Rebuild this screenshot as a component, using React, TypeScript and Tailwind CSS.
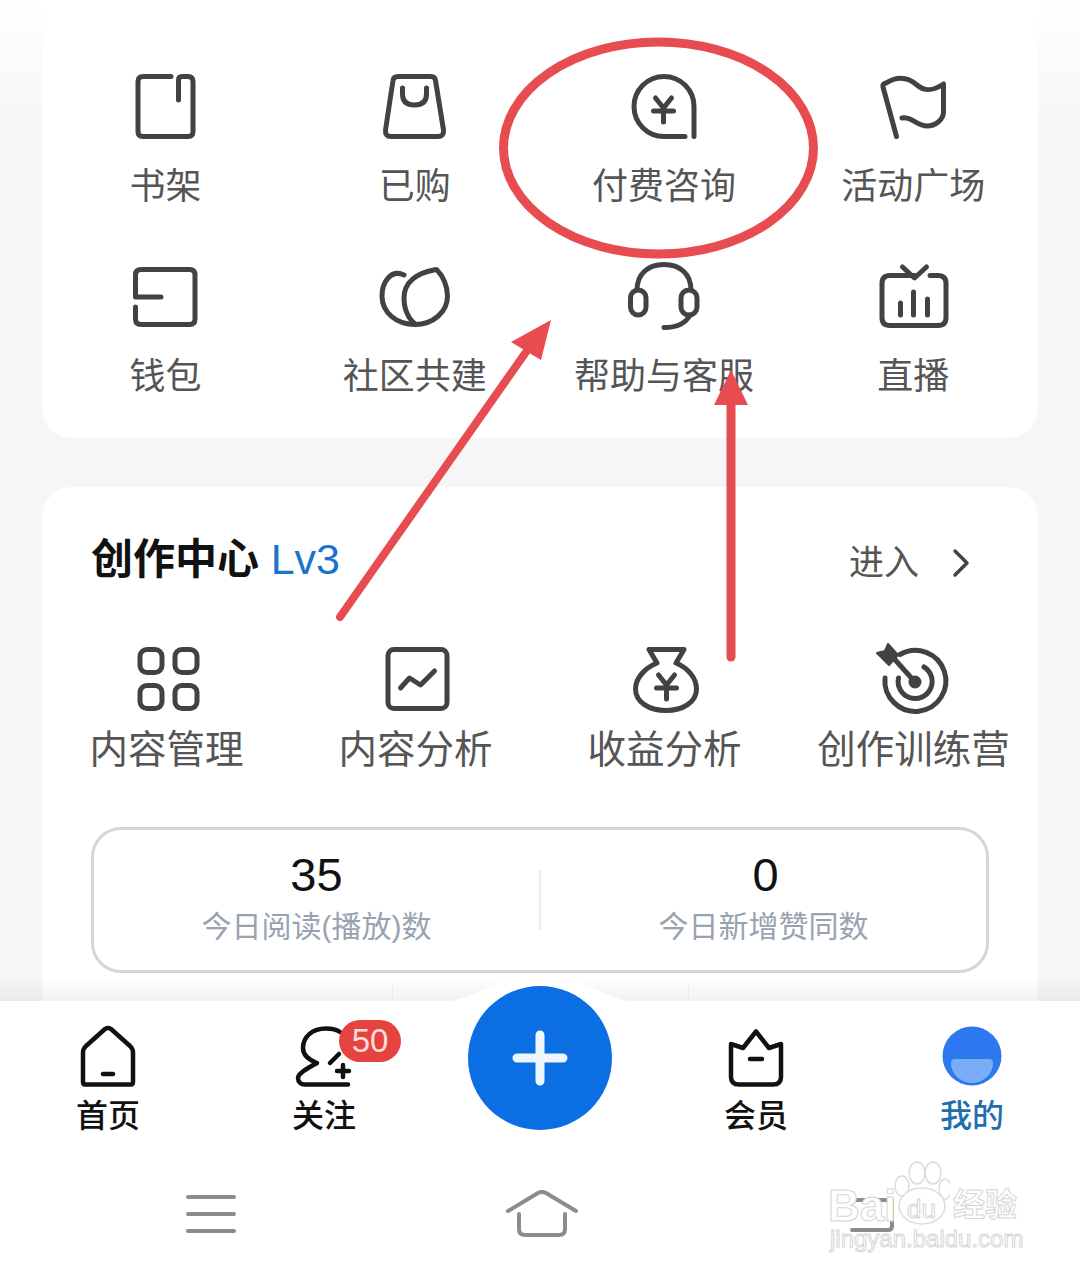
import React from 'react';

const FONT = "font-['Liberation_Sans','Noto_Sans_CJK_SC',sans-serif]";

function Icon({ children }: { children: React.ReactNode }) {
    return (
        <svg
            viewBox="0 0 72 72"
            fill="none"
            stroke="currentColor"
            strokeWidth="5"
            strokeLinecap="round"
            strokeLinejoin="round"
            className="w-[72px] h-[72px] text-[#424242] overflow-visible"
        >
            {children}
        </svg>
    );
}

const Yen = ({ x, y }: { x: number; y: number }) => (
    <path d={`M${x - 8} ${y - 13}L${x} ${y - 3}L${x + 8} ${y - 13}M${x - 10} ${y}H${x + 10}M${x} ${y - 3}V${y + 11}`} />
);

const topItems: { label: string; icon: React.ReactNode }[] = [
    {
        label: '书架',
        icon: <path d="M41 6.500H13Q8 6.500 8 11.500V61.500Q8 66.500 13 66.500H58Q63 66.500 63 61.500V11.500Q63 6.500 58 6.500H52Q48.500 6.500 48.500 10V30" />,
    },
    {
        label: '已购',
        icon: (
            <>
                <path d="M19 6.500H52Q56 6.500 56.500 10.500L64.500 60Q65 66.500 59 66.500H12Q6 66.500 6.500 60L14 10.500Q14.500 6.500 19 6.500Z" />
                <path d="M23.500 18V24Q23.500 35 35.500 35Q47.500 35 47.500 24V18" />
            </>
        ),
    },
    {
        label: '付费咨询',
        icon: (
            <>
                <path d="M57 66.500H36A30 30 0 1 1 66 36.500V66.500" />
                <Yen x={35.5} y={41} />
            </>
        ),
    },
    {
        label: '活动广场',
        icon: <path d="M19.500 66.500L6 17Q5 14 9 13C22 5 32 8 40 15C48 22 56 21 66.500 14V42C66.500 50 58 56 50 56C40 56 34 46 25 48" />,
    },
    {
        label: '钱包',
        icon: <path d="M31 37H5.500V15Q5.500 9.500 11 9.500H59.500Q65 9.500 65 15V59Q65 64.500 59.500 64.500H11Q5.500 64.500 5.500 59V47" />,
    },
    {
        label: '社区共建',
        icon: <path d="M25 15C12 9 3 22 3 36C3 53 18 64.500 36 64.500C54 64.500 68.500 52 68.500 36C68.500 26 64 16 58 10Q57 9 55 10C38 13 25 22 25 38C25 50 30 60 37 64.500" />,
    },
    {
        label: '帮助与客服',
        icon: (
            <>
                <path d="M9 30C9 14 20 4.500 36 4.500C52 4.500 63 14 63 30" />
                <rect x="2.500" y="30" width="15.500" height="25" rx="7.750" />
                <rect x="53" y="30" width="16" height="25" rx="8" />
                <path d="M62 55C58 63 50 67.500 36 67.500" />
            </>
        ),
    },
    {
        label: '直播',
        icon: (
            <>
                <path d="M25.500 7L37.500 18L49.500 7M53 15.500H61Q69 15.500 69 23.500V57.500Q69 65.500 61 65.500H13Q5 65.500 5 57.500V23.500Q5 15.500 13 15.500H37.500" />
                <path d="M23.500 43V55M36.500 32V55M50.500 39V55" />
            </>
        ),
    },
];

const createItems: { label: string; icon: React.ReactNode }[] = [
    {
        label: '内容管理',
        icon: (
            <>
                <rect x="9" y="4.500" width="22" height="23" rx="7" />
                <rect x="44" y="4.500" width="22" height="23" rx="7" />
                <rect x="9" y="40.500" width="22" height="23" rx="7" />
                <rect x="44" y="40.500" width="22" height="23" rx="7" />
            </>
        ),
    },
    {
        label: '内容分析',
        icon: (
            <>
                <rect x="8" y="4.500" width="59" height="59" rx="6" />
                <path d="M20.500 43L29.500 33L40.500 40L54.500 26" />
            </>
        ),
    },
    {
        label: '收益分析',
        icon: (
            <>
                <path d="M20 4.500H55L47 18C59 23 67.500 33 67.500 44C67.500 57 54 65.500 37 65.500C20 65.500 6.500 57 6.500 44C6.500 33 16 23 28 18Z" />
                <Yen x={37.5} y={43} />
            </>
        ),
    },
    {
        label: '创作训练营',
        icon: (
            <>
                <path d="M22 9.500A30.500 30.500 0 1 1 7 33" />
                <path d="M20.500 33A17 17 0 1 0 46 22" />
                <circle cx="37" cy="37" r="4" fill="currentColor" />
                <path d="M37 37L15.500 13" />
                <path d="M-1 8L7 6L10 -1L20 10L11 20Z" fill="currentColor" strokeWidth="2" />
            </>
        ),
    },
];

function Grid({ items, labelClass, rowClass }: { items: { label: string; icon: React.ReactNode }[]; labelClass: string; rowClass: string }) {
    return (
        <div className={rowClass}>
            {items.map((item) => (
                <div key={item.label} className="flex flex-col items-center">
                    <Icon>{item.icon}</Icon>
                    <span className={labelClass}>{item.label}</span>
                </div>
            ))}
        </div>
    );
}

export default function App() {
    return (
        <div className={`relative w-[1080px] h-[1276px] overflow-hidden bg-gradient-to-b from-white to-[#f6f6f6] to-[10%] ${FONT}`}>
            <div className="h-[1001px] overflow-hidden px-[42px]">
                <div className="h-[438px] bg-white rounded-b-[30px] pt-[70px]">
                    <Grid
                        items={topItems}
                        rowClass="grid grid-cols-4 -ml-[1px] gap-y-[48px]"
                        labelClass="text-[36px] leading-[50px] mt-[20px] text-[#555555] whitespace-nowrap"
                    />
                </div>

                <div className="mt-[49px] h-[600px] bg-white rounded-t-[30px] px-[49px] pt-[46px]">
                    <div className="flex items-center justify-between h-[52px]">
                        <div className="text-[42px] leading-[52px] font-bold text-[#111111] whitespace-nowrap">
                            创作中心 <span className="font-normal text-[43px] text-[#1a74c9]">Lv3</span>
                        </div>
                        <div className="flex items-center text-[35px] text-[#555555] pr-[18px] mt-[8px]">
                            进入
                            <svg viewBox="0 0 20 32" className="w-[20px] h-[32px] ml-[32px] text-[#444444]" fill="none" stroke="currentColor" strokeWidth="3.500" strokeLinecap="round" strokeLinejoin="round">
                                <path d="M4 4L16 16L4 28" />
                            </svg>
                        </div>
                    </div>

                    <Grid
                        items={createItems}
                        rowClass="-mx-[49px] mt-[60px] grid grid-cols-4"
                        labelClass="text-[38.5px] leading-[52px] mt-[7px] text-[#555555] whitespace-nowrap"
                    />

                    <div className="mt-[51px] h-[146px] rounded-[30px] border-[3px] border-[#d6d6d6] flex items-center">
                        <div className="flex-1 flex flex-col items-center">
                            <span className="text-[47px] leading-[48px] text-[#111111]">35</span>
                            <span className="text-[30px] leading-[44px] mt-[6px] text-[#99a3b0]">今日阅读(播放)数</span>
                        </div>
                        <div className="w-[2px] h-[60px] bg-[#ebebeb]" />
                        <div className="flex-1 flex flex-col items-center">
                            <span className="text-[47px] leading-[48px] pl-[4px] text-[#111111]">0</span>
                            <span className="text-[30px] leading-[44px] mt-[6px] text-[#99a3b0]">今日新增赞同数</span>
                        </div>
                    </div>
                </div>
            </div>

            {/* tab bar */}
            <div className="relative h-[153px] bg-white grid grid-cols-[216px_216px_216px_216px_216px] text-[32px] font-medium">
                <div className="absolute inset-x-0 -top-[26px] h-[26px] bg-gradient-to-b from-transparent to-black/5">
                    <div className="absolute left-[392px] top-[10px] w-[1px] h-[16px] bg-black/5" />
                    <div className="absolute left-[688px] top-[10px] w-[1px] h-[16px] bg-black/5" />
                </div>
                <div className="flex flex-col items-center pt-[24px] text-[#111111]">
                    <svg viewBox="0 0 60 64" className="w-[60px] h-[64px]" fill="none" stroke="currentColor" strokeWidth="4.500" strokeLinecap="round" strokeLinejoin="round">
                        <path d="M5 57V27Q5 24 8 21L27 4Q30 2 33 4L52 21Q55 24 55 27V57Q55 59.500 53 59.500H7Q5 59.500 5 57Z" />
                        <path d="M25 49H35" />
                    </svg>
                    <span className="leading-[38px] mt-[8px]">首页</span>
                </div>
                <div className="relative flex flex-col items-center pt-[24px] text-[#111111]">
                    <svg viewBox="0 0 60 64" className="w-[60px] h-[64px]" fill="none" stroke="currentColor" strokeWidth="4.500" strokeLinecap="round" strokeLinejoin="round">
                        <path d="M46 7C42 4 37 3.500 32 3.500C18 3.500 9 12 9 23C9 31 15 35 23 38C16 42 4 48 4 53C4 57 7 59.500 11 59.500H54" />
                        <path d="M36 38L45 29" />
                        <path d="M49 40V52M43 46H55" />
                    </svg>
                    <span className="leading-[38px] mt-[8px]">关注</span>
                    <span className="absolute left-[123px] top-[19px] w-[62px] h-[42px] rounded-full bg-[#e5433f] text-[#ffdcd8] text-[33px] leading-[42px] font-normal text-center">50</span>
                </div>
                <div className="relative">
                    <svg viewBox="0 0 220 30" className="absolute left-1/2 -translate-x-1/2 -top-[28px] w-[220px] h-[30px]">
                        <path d="M0 30C50 30 60 2 110 2C160 2 170 30 220 30Z" fill="#ffffff" />
                    </svg>
                    <div className="absolute left-1/2 -translate-x-1/2 -top-[15px] w-[144px] h-[144px] rounded-full bg-[#0b6fe3] flex items-center justify-center">
                        <svg viewBox="0 0 56 56" className="w-[56px] h-[56px] text-[#eef6ff]" fill="none" stroke="currentColor" strokeWidth="9" strokeLinecap="round">
                            <path d="M28 5V51M5 28H51" />
                        </svg>
                    </div>
                </div>
                <div className="flex flex-col items-center pt-[24px] text-[#111111]">
                    <svg viewBox="0 0 60 64" className="w-[60px] h-[64px]" fill="none" stroke="currentColor" strokeWidth="4.500" strokeLinecap="round" strokeLinejoin="round">
                        <path d="M5 19L17 23L30 6.500L43 23L55 19V52Q55 59.500 47 59.500H13Q5 59.500 5 52Z" />
                        <path d="M24 34H36" />
                    </svg>
                    <span className="leading-[38px] mt-[8px]">会员</span>
                </div>
                <div className="flex flex-col items-center pt-[24px] text-[#1f6fae]">
                    <svg viewBox="0 0 60 64" className="w-[60px] h-[64px]">
                        <circle cx="30" cy="31" r="29.500" fill="#2c79ef" />
                        <path d="M9 38Q9 34 13 34H47Q51 34 51 38C51 49 41 58 30 58C19 58 9 49 9 38Z" fill="#79adf8" />
                    </svg>
                    <span className="leading-[38px] mt-[8px]">我的</span>
                </div>
            </div>

            {/* system nav */}
            <div className="relative h-[122px] bg-white">
                <svg viewBox="0 0 54 44" className="absolute left-[184px] top-[39px] w-[54px] h-[44px] text-[#8c8c8c]" fill="none" stroke="currentColor" strokeWidth="4" strokeLinecap="round">
                    <path d="M4 4H50M4 21H50M4 38H50" />
                </svg>
                <svg viewBox="0 0 76 48" className="absolute left-[504px] top-[36px] w-[76px] h-[48px] text-[#8c8c8c]" fill="none" stroke="currentColor" strokeWidth="4" strokeLinecap="round" strokeLinejoin="round">
                    <path d="M4 21L34 3Q38 1 42 3L72 21" />
                    <path d="M15 24V39Q15 45 21 45H55Q61 45 61 39V24" />
                </svg>
                <svg viewBox="0 0 60 48" className="absolute left-[836px] top-[34px] w-[60px] h-[48px] text-[#8c8c8c]" fill="none" stroke="currentColor" strokeWidth="4" strokeLinecap="round">
                    <path d="M20 12H56V38Q56 42 52 42H16" />
                </svg>
            </div>

            {/* watermark */}
            <div className="absolute left-[828px] top-[1158px] w-[200px] h-[95px] text-white [-webkit-text-stroke:1px_#d6d6d6]">
                <svg viewBox="0 0 60 72" className="absolute left-[62px] top-[2px] w-[60px] h-[72px]" fill="#ffffff" stroke="#dcdcdc" strokeWidth="1.500">
                    <ellipse cx="27" cy="13" rx="8" ry="11" />
                    <ellipse cx="43" cy="13" rx="8" ry="11" />
                    <ellipse cx="12" cy="26" rx="7" ry="10" />
                    <ellipse cx="55" cy="29" rx="6" ry="10" />
                    <ellipse cx="32" cy="46" rx="23" ry="18" />
                </svg>
                <div className="absolute left-0 top-[30px] text-[44px] leading-[36px] font-bold">Ba</div>
                <div className="absolute left-[56px] top-[30px] text-[44px] leading-[36px] font-bold">i</div>
                <div className="absolute left-[79px] top-[36px] text-[26px] leading-[30px]">du</div>
                <div className="absolute left-[125px] top-[29px] text-[32px] leading-[36px] font-bold whitespace-nowrap">经验</div>
                <div className="absolute left-[2px] top-[69px] text-[24px] leading-[24px] whitespace-nowrap">jingyan.baidu.com</div>
            </div>

            {/* hand-drawn annotation */}
            <svg viewBox="0 0 1080 1276" className="absolute inset-0 w-[1080px] h-[1276px] pointer-events-none" fill="none">
                <ellipse cx="658.500" cy="148" rx="155" ry="106" stroke="#e64c50" strokeWidth="9" />
                <path d="M340 617L526 352" stroke="#e64c50" strokeWidth="8" strokeLinecap="round" />
                <path d="M551 320L511 342L541 360Z" fill="#e64c50" />
                <path d="M731 657V400" stroke="#e64c50" strokeWidth="9" strokeLinecap="round" />
                <path d="M731 370L714 405H748Z" fill="#e64c50" />
            </svg>
        </div>
    );
}
